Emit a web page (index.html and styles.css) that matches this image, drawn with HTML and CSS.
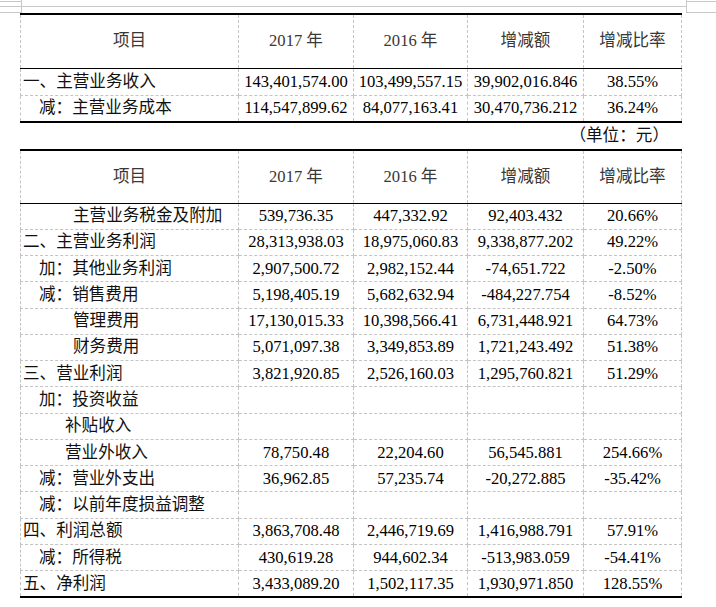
FILE: index.html
```html
<!DOCTYPE html>
<html lang="zh-CN">
<head>
<meta charset="utf-8">
<title>利润表</title>
<link rel="stylesheet" href="styles.css">
</head>
<body>
<svg class="marks" width="716" height="13" viewBox="0 0 716 13">
  <g stroke="#c8c8c8" stroke-width="1">
    <line x1="0" y1="1.5" x2="21" y2="1.5"/>
    <line x1="0" y1="12.5" x2="21" y2="12.5"/>
    <line x1="21.5" y1="0" x2="21.5" y2="13"/>
    <line x1="0" y1="6.5" x2="686" y2="6.5"/>
    <line x1="686.5" y1="0" x2="686.5" y2="13"/>
    <line x1="686" y1="1.5" x2="716" y2="1.5"/>
    <line x1="686" y1="12.5" x2="716" y2="12.5"/>
  </g>
</svg>
<table class="fin t1">
  <colgroup><col class="c1"><col class="c2"><col class="c3"><col class="c4"><col class="c5"></colgroup>
  <tr class="head">
    <td>项目</td><td>2017 年</td><td>2016 年</td><td class="brown">增减额</td><td class="brown">增减比率</td>
  </tr>
  <tr class="r1">
    <td class="lbl">一、主营业务收入</td><td>143,401,574.00</td><td>103,499,557.15</td><td>39,902,016.846</td><td>38.55%</td>
  </tr>
  <tr class="r2 last">
    <td class="lbl i1">减：主营业务成本</td><td>114,547,899.62</td><td>84,077,163.41</td><td>30,470,736.212</td><td>36.24%</td>
  </tr>
</table>
<p class="unit">（单位：元）</p>
<table class="fin t2">
  <colgroup><col class="c1"><col class="c2"><col class="c3"><col class="c4"><col class="c5"></colgroup>
  <tr class="head">
    <td>项目</td><td>2017 年</td><td>2016 年</td><td class="brown">增减额</td><td class="brown">增减比率</td>
  </tr>
  <tr><td class="lbl i3">主营业务税金及附加</td><td>539,736.35</td><td>447,332.92</td><td>92,403.432</td><td>20.66%</td></tr>
  <tr><td class="lbl">二、主营业务利润</td><td>28,313,938.03</td><td>18,975,060.83</td><td>9,338,877.202</td><td>49.22%</td></tr>
  <tr><td class="lbl i1">加：其他业务利润</td><td>2,907,500.72</td><td>2,982,152.44</td><td>-74,651.722</td><td>-2.50%</td></tr>
  <tr><td class="lbl i1">减：销售费用</td><td>5,198,405.19</td><td>5,682,632.94</td><td>-484,227.754</td><td>-8.52%</td></tr>
  <tr><td class="lbl i3">管理费用</td><td>17,130,015.33</td><td>10,398,566.41</td><td>6,731,448.921</td><td>64.73%</td></tr>
  <tr><td class="lbl i3">财务费用</td><td>5,071,097.38</td><td>3,349,853.89</td><td>1,721,243.492</td><td>51.38%</td></tr>
  <tr><td class="lbl">三、营业利润</td><td>3,821,920.85</td><td>2,526,160.03</td><td>1,295,760.821</td><td>51.29%</td></tr>
  <tr><td class="lbl i1">加：投资收益</td><td></td><td></td><td></td><td></td></tr>
  <tr><td class="lbl i2">补贴收入</td><td></td><td></td><td></td><td></td></tr>
  <tr><td class="lbl i2">营业外收入</td><td>78,750.48</td><td>22,204.60</td><td>56,545.881</td><td>254.66%</td></tr>
  <tr><td class="lbl i1">减：营业外支出</td><td>36,962.85</td><td>57,235.74</td><td>-20,272.885</td><td>-35.42%</td></tr>
  <tr><td class="lbl i1">减：以前年度损益调整</td><td></td><td></td><td></td><td></td></tr>
  <tr><td class="lbl">四、利润总额</td><td>3,863,708.48</td><td>2,446,719.69</td><td>1,416,988.791</td><td>57.91%</td></tr>
  <tr><td class="lbl i1">减：所得税</td><td>430,619.28</td><td>944,602.34</td><td>-513,983.059</td><td>-54.41%</td></tr>
  <tr class="last"><td class="lbl">五、净利润</td><td>3,433,089.20</td><td>1,502,117.35</td><td>1,930,971.850</td><td>128.55%</td></tr>
</table>
</body>
</html>
```

FILE: styles.css
```css
html, body {
  margin: 0;
  padding: 0;
  background: #ffffff;
}
body {
  width: 716px;
  height: 607px;
  overflow: hidden;
  font-family: "Liberation Serif", "Noto Sans CJK SC", serif;
  font-size: 16.6px;
  color: #000;
}
.marks {
  display: block;
}
.fin {
  border-collapse: collapse;
  table-layout: fixed;
  width: 661px;
  margin-left: 20px;
  border-top: 2px solid #000;
  border-bottom: 2px solid #000;
}
.c1 { width: 218px; }
.c2 { width: 115px; }
.c3 { width: 114px; }
.c4 { width: 116px; }
.c5 { width: 98px; }
.fin td {
  padding: 0;
  height: 25.27px;
  line-height: 20px;
  text-align: center;
  vertical-align: middle;
  white-space: nowrap;
  border: 1px dashed #c4c4c4;
}
.fin tr.last td {
  border-bottom: 2px solid #000;
}
.fin tr.head td {
  height: 52.5px;
  color: #383838;
  border-top: 2px solid #000;
  border-bottom: 1px solid #000;
}
.t2 tr.head td {
  height: 51.5px;
}
.fin tr.r1 td {
  height: 26px;
}
.fin tr.r2 td {
  height: 25.5px;
}
.fin td.brown {
  color: #6a4a2c;
}
.fin td.lbl {
  text-align: left;
  padding-left: 2px;
  color: #111;
}
.fin td.i1 { padding-left: 18px; }
.fin td.i2 { padding-left: 44px; }
.fin td.i3 { padding-left: 52px; }
.unit {
  margin: 0;
  width: 669px;
  height: 26px;
  line-height: 26px;
  text-align: right;
  color: #111;
}
```
